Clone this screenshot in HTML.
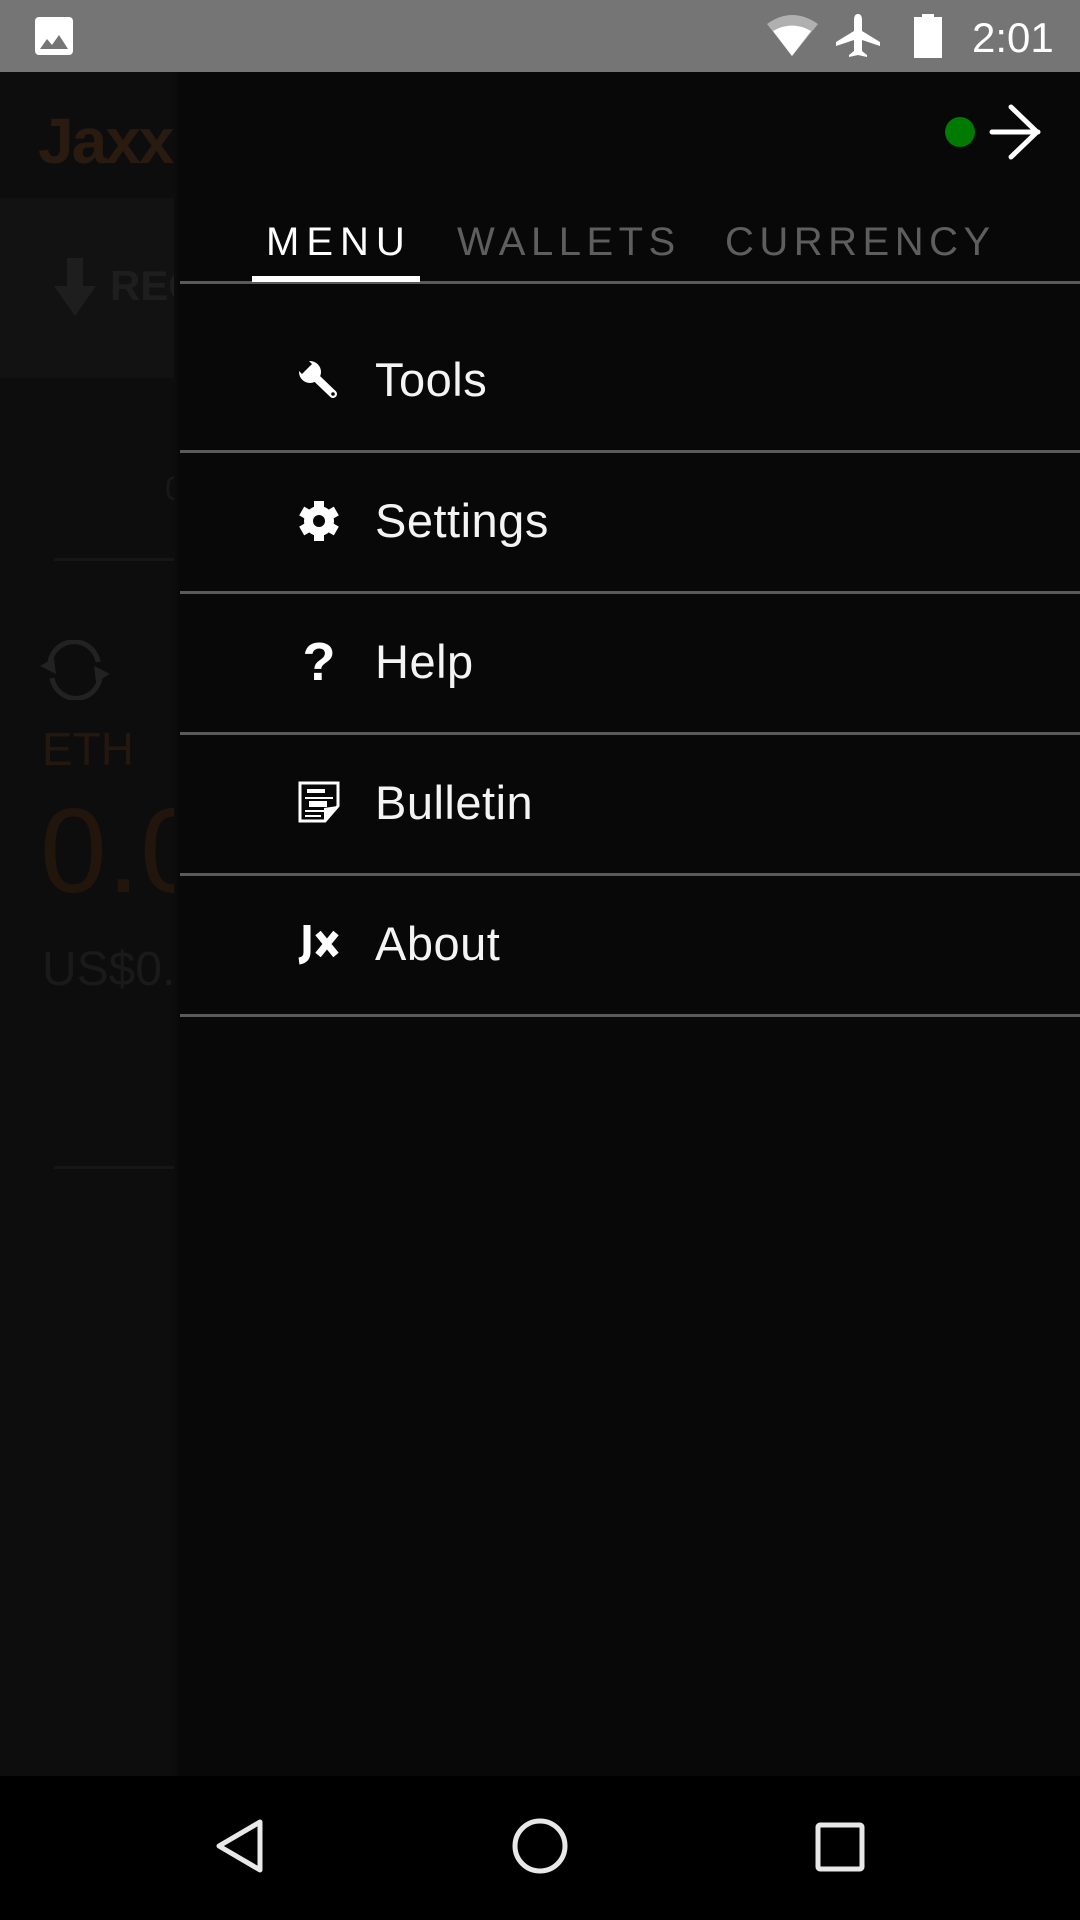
<!DOCTYPE html>
<html><head><meta charset="utf-8"><style>
*{margin:0;padding:0;box-sizing:border-box}
body{width:1080px;height:1920px;background:#0d0d0d;position:relative;overflow:hidden;font-family:"Liberation Sans",sans-serif}
.abs{position:absolute}
.sep{position:absolute;left:180px;right:0;height:3px;background:#5a5a5a}
.item{position:absolute;left:375px;color:#f4f4f4;font-size:47px;font-weight:normal;letter-spacing:0.5px}
.tab{position:absolute;top:220px;font-size:40px;letter-spacing:5.5px;color:#5e5e5e}
</style></head><body>
<div class="abs" style="left:0;top:0;width:1080px;height:72px;background:#757575"></div>
<svg class="abs" style="left:0;top:0" width="1080" height="72">
 <rect x="35" y="17" width="38" height="38" rx="4" fill="#fff"/>
 <path d="M40 49 L47 39 L52 45 L59 35 L68 49 Z" fill="#757575"/>
 <path d="M767 24 Q792 6 818 24 L792 56 Z" fill="#b0b0b0"/>
 <path d="M773 31 Q792 20 811 31 L792 56 Z" fill="#fff"/>
 <path d="M858 14 Q862 14 862 20 L862 31 L880 42 L880 46 L862 40 L862 51 L867 55 L867 57 L858 55 L849 57 L849 55 L854 51 L854 40 L836 46 L836 42 L854 31 L854 20 Q854 14 858 14Z" fill="#fff"/>
 <rect x="922" y="14" width="12" height="4" fill="#fff"/>
 <rect x="914" y="17" width="28" height="41" fill="#fff"/>
 <text x="972" y="52" font-family="Liberation Sans" font-size="42" fill="#fff">2:01</text>
</svg>
<div class="abs" style="left:38px;top:104px;font-size:64px;font-weight:bold;color:#2a1b10;letter-spacing:-2px">Jaxx</div>
<div class="abs" style="left:0;top:198px;width:180px;height:180px;background:#121212"></div>
<svg class="abs" style="left:50px;top:258px" width="50" height="60"><rect x="17" y="0" width="16" height="30" fill="#1e1e1e"/><path d="M4 28 L46 28 L25 58Z" fill="#1e1e1e"/></svg>
<div class="abs" style="left:110px;top:262px;font-size:42px;font-weight:bold;color:#1e1e1e">REC</div>
<div class="abs" style="left:165px;top:470px;font-size:34px;color:#181818">0</div>
<div class="abs" style="left:54px;top:558px;width:126px;height:3px;background:#161616"></div>
<svg class="abs" style="left:40px;top:640px" width="70" height="60"><path d="M10 30 A24 24 0 0 1 58 22 M60 30 A24 24 0 0 1 12 38" stroke="#222" stroke-width="5" fill="none"/><path d="M0 26 L14 18 L16 34Z M70 34 L56 42 L54 26Z" fill="#222"/></svg>
<div class="abs" style="left:42px;top:722px;font-size:46px;color:#24170e">ETH</div>
<div class="abs" style="left:40px;top:782px;font-size:120px;color:#22150c">0.0</div>
<div class="abs" style="left:42px;top:942px;font-size:48px;color:#1a1a1a">US$0.0</div>
<div class="abs" style="left:54px;top:1166px;width:126px;height:3px;background:#161616"></div>
<div class="abs" style="left:174px;top:72px;width:6px;height:1704px;background:linear-gradient(90deg,#0d0d0d,#080808)"></div>
<div class="abs" style="left:180px;top:72px;width:900px;height:1704px;background:#080808"></div>
<svg class="abs" style="left:930px;top:95px" width="120" height="80"><circle cx="30" cy="37" r="15" fill="#007a00"/><path d="M62 37 L108 37 M81 12 L107 37 L81 62" stroke="#fff" stroke-width="5" stroke-linecap="round" fill="none"/></svg>
<div class="tab" style="left:266px;color:#fff;letter-spacing:7px">MENU</div>
<div class="tab" style="left:457px">WALLETS</div>
<div class="tab" style="left:725px">CURRENCY</div>
<div class="sep" style="top:281px"></div>
<div class="abs" style="left:252px;top:276px;width:168px;height:6px;background:#fff"></div>
<div class="sep" style="top:450px"></div>
<div class="sep" style="top:591px"></div>
<div class="sep" style="top:732px"></div>
<div class="sep" style="top:873px"></div>
<div class="sep" style="top:1014px"></div>
<div class="item" style="top:352px">Tools</div>
<div class="item" style="top:493px">Settings</div>
<div class="item" style="top:634px">Help</div>
<div class="item" style="top:775px">Bulletin</div>
<div class="item" style="top:916px">About</div>
<svg class="abs" style="left:0;top:0;pointer-events:none" width="1080" height="1920">
 <circle cx="310" cy="372" r="11" fill="#fff"/>
 <path d="M310 372 L333 394" stroke="#fff" stroke-width="8" stroke-linecap="round"/>
 <path d="M296 368 L306 358 L312 364 L302 374 Z" fill="#080808"/>
 <circle cx="333" cy="394" r="1.8" fill="#080808"/>
 <g transform="translate(319,521)" fill="#fff">
  <circle r="15"/>
  <rect x="-5" y="-20" width="10" height="40"/>
  <rect x="-5" y="-20" width="10" height="40" transform="rotate(60)"/>
  <rect x="-5" y="-20" width="10" height="40" transform="rotate(120)"/>
  <circle r="6" fill="#080808"/>
 </g>
 <text x="319" y="680" text-anchor="middle" font-family="Liberation Sans" font-weight="bold" font-size="54" fill="#fff">?</text>
 <path d="M300 783 L338 783 L338 806 L325 821 L300 821 Z" fill="none" stroke="#fff" stroke-width="3"/>
 <path d="M324 821 L324 808 L338 806" fill="#fff"/>
 <rect x="307" y="789" width="18" height="4" fill="#fff"/>
 <rect x="305" y="797" width="28" height="2" fill="#fff"/>
 <rect x="309" y="801" width="18" height="6" fill="#fff"/>
 <rect x="305" y="810" width="20" height="2" fill="#fff"/>
 <rect x="305" y="815" width="16" height="2" fill="#fff"/>
 <path d="M307 925 L307 952 Q307 960 299 961" stroke="#fff" stroke-width="7" fill="none"/>
 <path d="M318 933 L336 955 M336 933 L318 955" stroke="#fff" stroke-width="7"/>
</svg>
<div class="abs" style="left:0;top:1776px;width:1080px;height:144px;background:#000"></div>
<svg class="abs" style="left:0;top:1776px" width="1080" height="144">
 <path d="M260 46 L260 94 L219 70 Z" fill="none" stroke="#e8e8e8" stroke-width="5" stroke-linejoin="round"/>
 <circle cx="540" cy="70" r="25" fill="none" stroke="#e8e8e8" stroke-width="5"/>
 <rect x="818" y="49" width="44" height="44" rx="2" fill="none" stroke="#e8e8e8" stroke-width="5"/>
</svg>
</body></html>
